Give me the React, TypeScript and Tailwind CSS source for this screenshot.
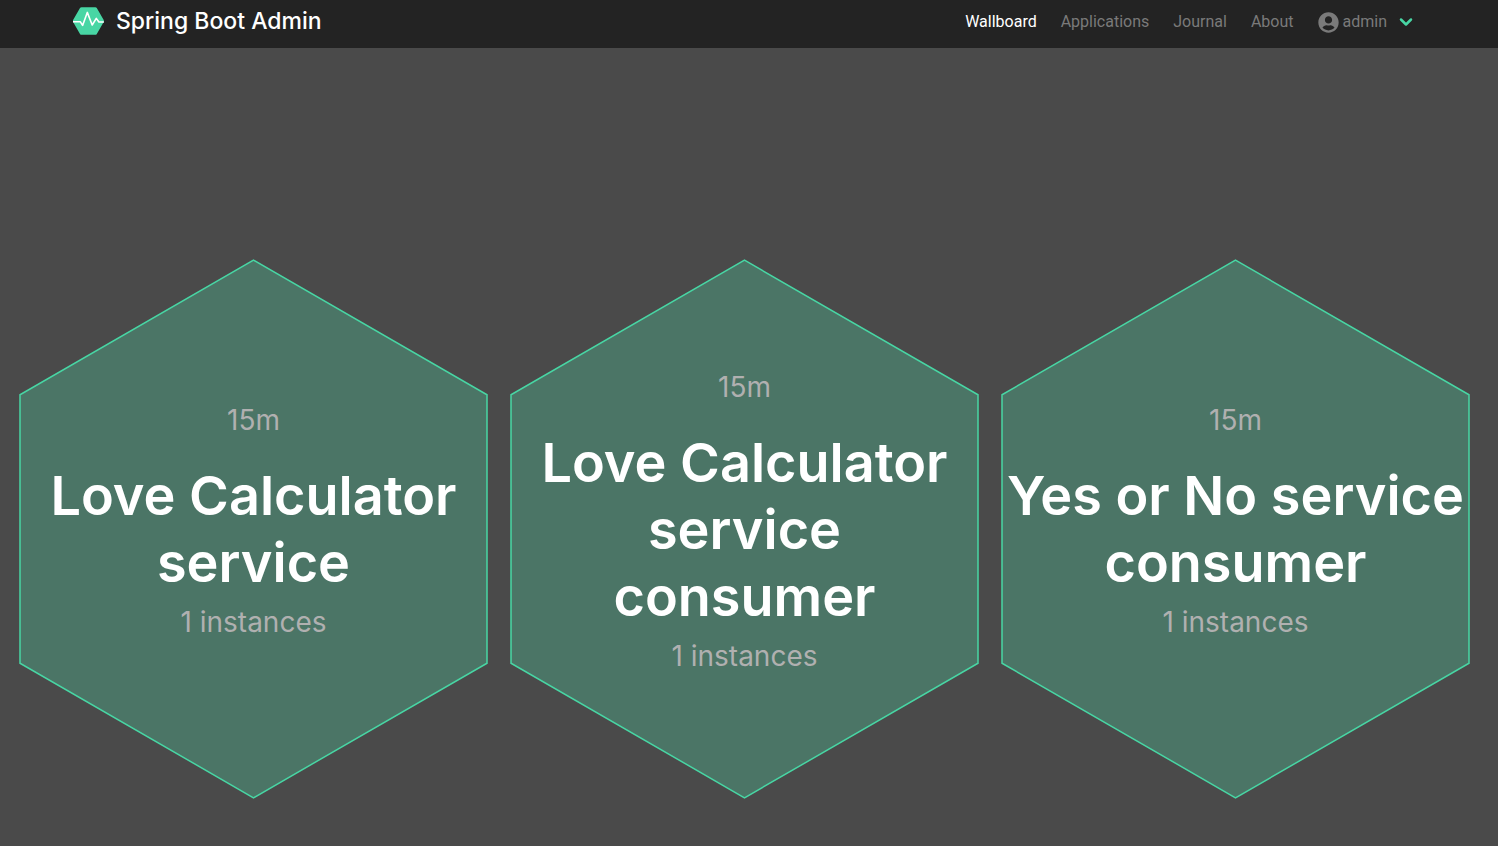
type Application = { name: string; uptime: string; instances: number };

const applications: Application[] = [
  { name: "Love Calculator service", uptime: "15m", instances: 1 },
  { name: "Love Calculator service consumer", uptime: "15m", instances: 1 },
  { name: "Yes or No service consumer", uptime: "15m", instances: 1 },
];

const links = ["Wallboard", "Applications", "Journal", "About"];

function Logo() {
  return (
    <svg className="h-7 w-8 shrink-0" viewBox="0 0 32 28" aria-hidden="true">
      <path
        d="M8.500 0.200h13.800q1 0 1.500 0.900l6.900 12q0.400 0.900 0 1.800l-6.900 12q-0.500 0.900-1.500 0.900H8.500q-1 0-1.500-0.900l-6.900-12q-0.400-0.900 0-1.800l6.900-12q0.500-0.900 1.500-0.900z"
        fill="#48d6a4"
      />
      <path
        d="M0 14.800h7.400l2.200 3.600 4.700-13 4.900 12.600 4.100-6.600 2.600 3.600h5"
        fill="none"
        stroke="#fff"
        strokeWidth="1.600"
        strokeLinejoin="round"
      />
    </svg>
  );
}

function UserIcon() {
  return (
    <svg className="size-[21px]" viewBox="0 0 496 512" fill="currentColor" aria-hidden="true">
      <path d="M248 8C111 8 0 119 0 256s111 248 248 248 248-111 248-248S385 8 248 8zm0 96c48.600 0 88 39.400 88 88s-39.400 88-88 88-88-39.400-88-88 39.400-88 88-88zm0 344c-58.700 0-111.300-26.600-146.500-68.200 18.800-35.400 55.600-59.800 98.500-59.800 2.400 0 4.800.4 7.100 1.100 13 4.200 26.600 6.900 40.900 6.900 14.300 0 28-2.700 40.900-6.900 2.300-.7 4.700-1.100 7.100-1.100 42.900 0 79.700 24.400 98.500 59.800C359.300 421.400 306.700 448 248 448z" />
    </svg>
  );
}

function Navbar() {
  return (
    <header className="flex h-12 items-center justify-between bg-[#232323] pr-[85px] pb-1.5 pl-[73px]">
      <a href="#" className="flex items-center gap-[11px] text-[23px] leading-8 font-medium text-white">
        <Logo />
        Spring Boot Admin
      </a>
      <nav className="flex items-center gap-6 pt-0.5 font-[Roboto,sans-serif] text-base text-[#7a7a7a]">
        {links.map((link, i) => (
          <a key={link} href="#" className={i === 0 ? "text-white" : ""}>
            {link}
          </a>
        ))}
        <button type="button" className="flex items-center">
          <UserIcon />
          <span className="ml-1">admin</span>
          <svg className="ml-3 h-3 w-3.5 text-[#48d6a4]" viewBox="0 0 14 12" aria-hidden="true">
            <path
              d="M2 3.500l5 5 5-5"
              fill="none"
              stroke="currentColor"
              strokeWidth="2.500"
              strokeLinecap="round"
              strokeLinejoin="round"
            />
          </svg>
        </button>
      </nav>
    </header>
  );
}

function HexTile({ app }: { app: Application }) {
  return (
    <a href="#" className="grid items-center text-center">
      <svg className="col-start-1 row-start-1 w-full" viewBox="0 0 469 540" aria-hidden="true">
        <path
          d="M234.500 1.200L468 135.800V404.200L234.500 538.800L1 404.200V135.800z"
          fill="#4b7566"
          stroke="#48d6a4"
          strokeWidth="1.500"
        />
      </svg>
      <div className="col-start-1 row-start-1 px-1 pb-4">
        <p className="text-[28px] leading-9 text-[#b0b0b0]">{app.uptime}</p>
        <h2 className="mt-6 text-[54px] leading-[67px] font-semibold text-white">{app.name}</h2>
        <p className="mt-2 text-[28px] leading-9 text-[#b0b0b0]">{app.instances} instances</p>
      </div>
    </a>
  );
}

export default function App() {
  return (
    <div className="flex min-h-screen flex-col bg-[#4a4a4a] font-[Inter,sans-serif]">
      <Navbar />
      <main className="grid flex-1 grid-cols-3 content-end gap-[22px] pr-7 pb-[47px] pl-[19px]">
        {applications.map((app) => (
          <HexTile key={app.name} app={app} />
        ))}
      </main>
    </div>
  );
}
